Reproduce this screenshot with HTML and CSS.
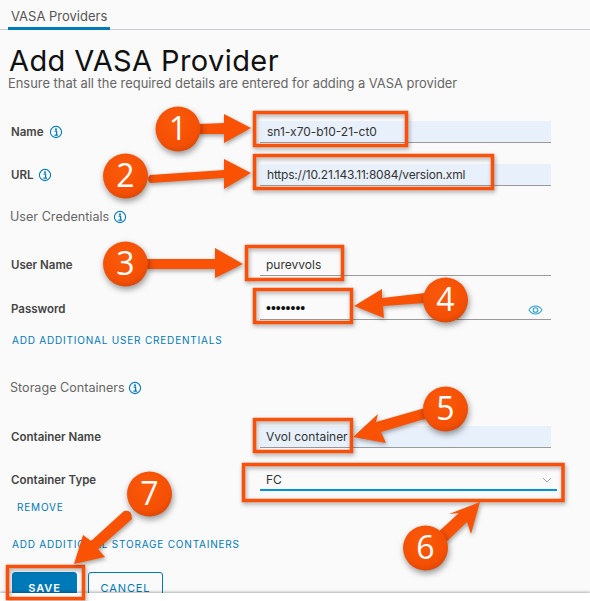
FILE: index.html
```html
<!DOCTYPE html>
<html>
<head>
  <meta charset="UTF-8">
  <title>Add VASA Provider</title>
  <link rel="stylesheet" href="styles.css">
</head>
<body>
  <svg width="0" height="0" class="defs">
    <defs>
      <symbol id="info" viewBox="0 0 14 14">
        <circle cx="7" cy="7" r="5.6" fill="none" stroke="#0079b8" stroke-width="1.1"/>
        <circle cx="7" cy="4.3" r="1" fill="#0079b8"/>
        <path d="M5.6 6.2H7.6V10M5.4 10.2H9" fill="none" stroke="#0079b8" stroke-width="1.2"/>
      </symbol>
      <radialGradient id="badge" cx="45%" cy="35%" r="70%">
        <stop offset="0" stop-color="#fb5a0a"/>
        <stop offset="0.75" stop-color="#f44f04"/>
        <stop offset="1" stop-color="#d54605"/>
      </radialGradient>
    </defs>
  </svg>

  <div class="tabs"><span class="tab">VASA Providers</span></div>

  <h1>Add VASA Provider</h1>
  <p class="subtitle">Ensure that all the required details are entered for adding a VASA provider</p>

  <form class="form">
    <div class="row">
      <label>Name <svg class="info"><use href="#info"/></svg></label>
      <div class="field filled wide">sn1-x70-b10-21-ct0</div>
    </div>
    <div class="row row-next">
      <label>URL <svg class="info"><use href="#info"/></svg></label>
      <div class="field filled wide url">https://10.21.143.11:8084/version.xml</div>
    </div>

    <div class="section section-user">User Credentials <svg class="info"><use href="#info"/></svg></div>

    <div class="row row-user">
      <label>User Name</label>
      <div class="field">purevvols</div>
    </div>
    <div class="row row-password">
      <label>Password</label>
      <div class="field secret">••••••••
        <svg class="eye" viewBox="0 0 16 12">
          <path d="M1 6C3 3 5.300 1.800 8 1.800S13 3 15 6C13 9 10.700 10.200 8 10.200S3 9 1 6Z" fill="none" stroke="#2f9fd0" stroke-width="1.100"/>
          <circle cx="8" cy="6" r="2.500" fill="none" stroke="#2f9fd0" stroke-width="1.100"/>
        </svg>
      </div>
    </div>
    <a class="link link-user">ADD ADDITIONAL USER CREDENTIALS</a>

    <div class="section section-storage">Storage Containers <svg class="info"><use href="#info"/></svg></div>

    <div class="row row-container">
      <label>Container Name</label>
      <div class="field filled">Vvol container</div>
    </div>
    <div class="row row-next">
      <label>Container Type</label>
      <div class="field select">FC
        <svg class="chevron" viewBox="0 0 10 6"><path d="M1 1L5 5L9 1" fill="none" stroke="#a0a0a0" stroke-width="1"/></svg>
      </div>
    </div>
    <a class="link link-remove">REMOVE</a>
    <a class="link link-storage">ADD ADDITIONAL STORAGE CONTAINERS</a>

    <div class="buttons">
      <button type="button" class="btn btn-primary">SAVE</button>
      <button type="button" class="btn">CANCEL</button>
    </div>
  </form>

  <div class="footer"></div>

  <!-- callouts drawn on top of the screenshot -->
  <svg class="callouts" width="590" height="601" viewBox="0 0 590 601">
    <g class="boxes">
      <rect x="254.500" y="112.500" width="152" height="33"/>
      <rect x="254.500" y="155.500" width="238" height="33"/>
      <rect x="246.500" y="246.500" width="96" height="33"/>
      <rect x="254.500" y="289.500" width="97" height="33"/>
      <rect x="254.500" y="419.500" width="97" height="32"/>
      <rect x="243.500" y="464.500" width="319.500" height="36"/>
      <rect x="7.500" y="566.500" width="76" height="32"/>
    </g>
    <g class="arrows">
      <path d="M198 124L224 123V114L251 128L224 143V134L198 134Z"/>
      <path d="M150 175L224 170V159L251 173L224 189V178L150 183Q146 179 150 175Z"/>
      <path d="M146 259H215V248L243 264L215 278V269H146Z"/>
      <path d="M425 293L382 298V289L354 306L384 318L383 306L425 303Z"/>
      <path d="M425 408L376 422L378 414L353 437L386 443L381 432L428 418Z"/>
      <path d="M436 534L459 513L449 514L480 502L471 534L467 522L444 544Z"/>
      <path d="M124 511L91 541L83 535L74 564L105 557L98 549L132 519Q132 509 124 511Z"/>
    </g>
    <g class="badges">
      <g><circle cx="178" cy="129" r="22.500"/><text x="178" y="140">1</text></g>
      <g><circle cx="125.500" cy="176" r="22.500"/><text x="125.500" y="187">2</text></g>
      <g><circle cx="125.500" cy="264" r="22.500"/><text x="125.500" y="275">3</text></g>
      <g><circle cx="445.500" cy="300" r="22.500"/><text x="445.500" y="311">4</text></g>
      <g><circle cx="445.500" cy="409" r="22.500"/><text x="445.500" y="420">5</text></g>
      <g><circle cx="425.500" cy="548" r="22.500"/><text x="425.500" y="559">6</text></g>
      <g><circle cx="149.500" cy="494" r="22.500"/><text x="149.500" y="505">7</text></g>
    </g>
  </svg>
</body>
</html>
```

FILE: styles.css
```css
html, body {
  margin: 0;
  height: 601px;
  overflow: hidden;
}
body {
  position: relative;
  background-color: #fafafa;
  font-family: Inter, "Open Sans", sans-serif;
  color: #565656;
}
.defs {
  position: absolute;
}
.tabs {
  height: 29px;
  padding-left: 8px;
  border-bottom: 1px solid #c8ccd0;
}
.tab {
  display: inline-block;
  height: 27px;
  padding: 0 3px;
  line-height: 32px;
  font-size: 13px;
  color: #555;
  border-bottom: 3px solid #0079b8;
}
h1 {
  margin: 16px 0 0 9px;
  font-size: 29px;
  line-height: 30px;
  font-weight: 400;
  letter-spacing: 0.4px;
  color: #111;
}
.subtitle {
  margin: 0 0 0 8px;
  font-size: 12.9px;
  line-height: 16px;
  color: #666;
}
.form {
  margin-top: 29px;
}
.row {
  display: grid;
  grid-template-columns: 249px 291px;
  padding-left: 11px;
  height: 22px;
  align-items: center;
}
.row-next {
  margin-top: 21px;
}
.row-password {
  margin-top: 22px;
}
.row-user {
  margin-top: 29px;
}
.row-container {
  margin-top: 30px;
}
label {
  font-size: 11.5px;
  font-weight: 600;
  color: #444;
  display: flex;
  align-items: center;
  gap: 5px;
}
.info {
  width: 14px;
  height: 14px;
  vertical-align: -3px;
}
.field {
  position: relative;
  height: 22px;
  line-height: 21px;
  padding-left: 6px;
  font-size: 12px;
  color: #333;
  border-bottom: 1px solid #9a9a9a;
  box-sizing: border-box;
}
.filled {
  background-color: #e8f0fb;
}
.wide {
  padding-left: 7px;
}
.url {
  letter-spacing: -0.2px;
}
.secret {
  font-family: "Liberation Sans", sans-serif;
  font-size: 14px;
  color: #111;
}
.eye {
  position: absolute;
  right: 8px;
  top: 6px;
  width: 15px;
  height: 12px;
}
.select {
  width: 297px;
  border-bottom: 2px solid #0095d3;
}
.chevron {
  position: absolute;
  right: 5px;
  top: 8px;
  width: 10px;
  height: 6px;
}
.section {
  margin-left: 10px;
  font-size: 12.6px;
  line-height: 16px;
  color: #666;
}
.section-user {
  margin-top: 23px;
}
.section-storage {
  margin-top: 33px;
}
.link {
  display: block;
  font-size: 10px;
  line-height: 14px;
  letter-spacing: 0.8px;
  color: #0079b8;
}
.link-user {
  margin: 13px 0 0 12px;
}
.link-remove {
  margin: 9px 0 0 17px;
}
.link-storage {
  margin: 23px 0 0 12px;
}
.buttons {
  display: flex;
  gap: 11px;
  margin: 21px 0 0 12px;
}
.btn {
  width: 75px;
  height: 32px;
  padding: 0;
  font-family: inherit;
  font-size: 11px;
  letter-spacing: 0.9px;
  color: #0079b8;
  background: transparent;
  border: 1px solid #0079b8;
  border-radius: 3px;
}
.btn-primary {
  width: 65px;
  color: #fff;
  font-weight: 600;
  background-color: #0079b8;
}
.footer {
  position: absolute;
  left: 0;
  right: 0;
  bottom: 0;
  height: 8px;
  background-color: #fff;
  box-shadow: 0 -1px 3px rgba(0, 0, 0, 0.3);
}
.callouts {
  position: absolute;
  left: 0;
  top: 0;
}
.boxes rect {
  fill: none;
  stroke: #f9500a;
  stroke-width: 3.5;
  filter: drop-shadow(1px 2px 2px rgba(0, 0, 0, 0.35));
}
.arrows path {
  fill: #f95204;
  filter: drop-shadow(1px 2px 2px rgba(0, 0, 0, 0.35));
}
.badges circle {
  fill: url(#badge);
  filter: drop-shadow(1px 3px 3px rgba(0, 0, 0, 0.4));
}
.badges text {
  font-family: "Open Sans", sans-serif;
  font-size: 32px;
  font-weight: 500;
  fill: #fff;
  text-anchor: middle;
}
```
